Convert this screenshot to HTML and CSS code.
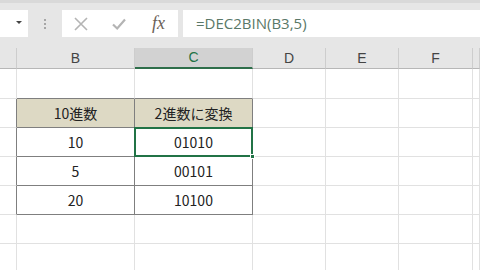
FILE: index.html
```html
<!DOCTYPE html>
<html lang="ja">
<head>
  <meta charset="UTF-8">
  <title>DEC2BIN</title>
  <link rel="stylesheet" href="styles.css">
</head>
<body>
  <div class="topbar">
    <div class="namebox"><span class="arrow"></span></div>
    <div class="grip"><i></i><i></i><i></i></div>
    <div class="fbuttons">
      <svg class="ic" width="14" height="14" viewBox="0 0 14 14"><path d="M1 1 L13 13 M13 1 L1 13" stroke="#b4b4b4" stroke-width="1.6" fill="none"/></svg>
      <svg class="ic" width="14" height="14" viewBox="0 0 14 14"><path d="M1 7.5 L5.2 11.5 L13 2.5" stroke="#b4b4b4" stroke-width="2.2" fill="none"/></svg>
      <span class="fx">fx</span>
    </div>
    <div class="formula">=DEC2BIN(B3,5)</div>
  </div>

  <div class="sheet">
    <div class="ch first"></div>
    <div class="ch">B</div>
    <div class="ch sel">C</div>
    <div class="ch">D</div>
    <div class="ch">E</div>
    <div class="ch">F</div>
    <div class="ch"></div>

    <div class="c"></div><div class="c db"></div><div class="c db"></div><div class="c"></div><div class="c"></div><div class="c"></div><div class="c"></div>

    <div class="c dr"></div><div class="c t head">10進数</div><div class="c t head">2進数に変換</div><div class="c"></div><div class="c"></div><div class="c"></div><div class="c"></div>

    <div class="c dr"></div><div class="c t">10</div><div class="c t active">01010</div><div class="c"></div><div class="c"></div><div class="c"></div><div class="c"></div>

    <div class="c dr"></div><div class="c t">5</div><div class="c t">00101</div><div class="c"></div><div class="c"></div><div class="c"></div><div class="c"></div>

    <div class="c dr"></div><div class="c t">20</div><div class="c t">10100</div><div class="c"></div><div class="c"></div><div class="c"></div><div class="c"></div>

    <div class="c"></div><div class="c"></div><div class="c"></div><div class="c"></div><div class="c"></div><div class="c"></div><div class="c"></div>

    <div class="c"></div><div class="c"></div><div class="c"></div><div class="c"></div><div class="c"></div><div class="c"></div><div class="c"></div>
  </div>
</body>
</html>
```
FILE: styles.css
```css
body {
  margin: 0;
  width: 480px;
  height: 270px;
  overflow: hidden;
  background: #ffffff;
  font-family: "Noto Sans CJK JP", "Noto Sans", sans-serif;
}
.topbar {
  display: flex;
  height: 45px;
  padding-top: 7px;
  align-items: flex-start;
  background: #e6e6e6;
  border-top: 3px solid #d9d9d9;
  box-sizing: border-box;
}
.namebox {
  width: 28px;
  height: 27px;
  background: #ffffff;
  position: relative;
}
.arrow {
  position: absolute;
  left: 16px;
  top: 11px;
  border-left: 3px solid transparent;
  border-right: 3px solid transparent;
  border-top: 3px solid #444444;
}
.grip {
  width: 34px;
  height: 27px;
  display: flex;
  flex-direction: column;
  align-items: center;
  justify-content: center;
  gap: 2px;
}
.grip i {
  width: 2px;
  height: 2px;
  background: #a6a6a6;
}
.fbuttons {
  width: 116px;
  height: 27px;
  background: #ffffff;
  display: flex;
  align-items: center;
  padding-left: 12px;
  box-sizing: border-box;
}
.fbuttons .ic {
  margin-right: 24px;
}
.fbuttons .ic + .ic {
  margin-right: 26px;
}
.fx {
  font-family: "Liberation Serif", serif;
  font-style: italic;
  font-size: 18px;
  color: #6b6157;
  line-height: 27px;
}
.formula {
  flex: 1;
  margin-left: 5px;
  height: 27px;
  background: #ffffff;
  padding-left: 13px;
  font-family: "Open Sans", "Liberation Sans", sans-serif;
  font-size: 15px;
  line-height: 26px;
  color: #5a7868;
}
.sheet {
  display: grid;
  grid-template-columns: 17px 118px 118px 73px 73px 74px 1fr;
  grid-template-rows: 24px 30px 29px 29px 29px 29px 29px 29px;
  background: #e6e6e6;
}
.ch {
  background: #e6e6e6;
  border-right: 1px solid #cdcdcd;
  border-bottom: 1px solid #b7b7b7;
  margin-top: 3px;
  font-family: "Liberation Sans", sans-serif;
  font-size: 14px;
  color: #444444;
  text-align: center;
  line-height: 20px;
}
.ch.sel {
  background: #d2d2d2;
  color: #217346;
  border-bottom: 2px solid #2e6e4a;
  line-height: 19px;
}
.c {
  background: #ffffff;
  border-right: 1px solid #e1e1e1;
  border-bottom: 1px solid #e1e1e1;
  font-size: 14px;
  color: #222222;
  text-align: center;
  line-height: 28px;
  position: relative;
}
.c.db {
  border-bottom-color: #7f7f7f;
}
.c.dr {
  border-right-color: #7f7f7f;
}
.c.t {
  border-right-color: #7f7f7f;
  border-bottom-color: #7f7f7f;
}
.c.head {
  background: #ddd9c4;
}
.c.active::after {
  content: "";
  position: absolute;
  left: -1px;
  top: -1px;
  right: -1px;
  bottom: -1px;
  border: 2px solid #217346;
}
.c.active::before {
  content: "";
  position: absolute;
  right: -3px;
  bottom: -3px;
  width: 5px;
  height: 5px;
  background: #217346;
  border: 1px solid #ffffff;
  box-sizing: border-box;
  z-index: 1;
}
```
